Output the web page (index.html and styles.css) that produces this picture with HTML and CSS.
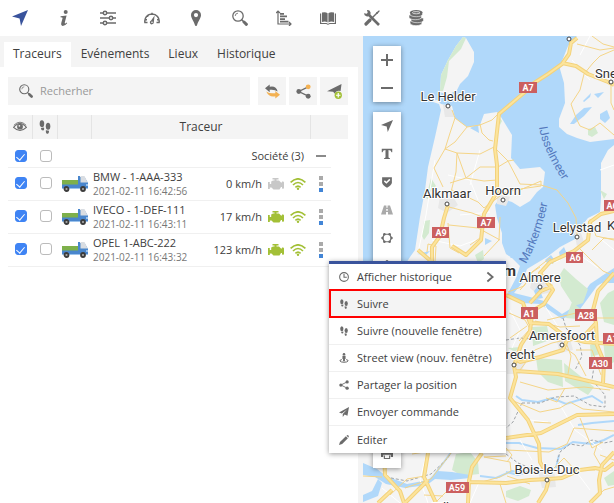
FILE: index.html
```html
<!DOCTYPE html>
<html lang="fr">
<head>
<meta charset="utf-8">
<meta name="viewport" content="width=device-width, initial-scale=1">
<title>Traceurs</title>
<link rel="stylesheet" href="styles.css">
</head>
<body>
<svg class="sprite" aria-hidden="true">
  <symbol id="i-arrow" viewBox="0 0 16 16"><path d="M16 0 9 16 7.600 8.600 0 6.600Z"/></symbol>
  <symbol id="i-info" viewBox="0 0 16 16"><circle cx="9.700" cy="2" r="2"/><path d="M4.600 6.200 10.600 5.400 8.800 12.600Q8.600 13.800 9.400 13.500L10.800 12.500 11.200 13.200Q9 16 6.600 15.900 4.600 15.700 5.200 13.300L6.600 7.900Q6.800 7.200 4.500 7.200Z"/></symbol>
  <symbol id="i-sliders" viewBox="0 0 16 16"><g fill="none" stroke="currentColor" stroke-width="1.500"><path d="M0 3H3.200M6.800 3H16M0 8H9.200M12.800 8H16M0 13H3.200M6.800 13H16"/><circle cx="5" cy="3" r="1.700"/><circle cx="11" cy="8" r="1.700"/><circle cx="5" cy="13" r="1.700"/></g></symbol>
  <symbol id="i-gauge" viewBox="0 0 16 16"><path fill="none" stroke="currentColor" stroke-width="1.500" d="M3.500 12.400H.9A7.200 7.200 0 1 1 15.100 12.400H12.500M8 2.800V5M3 5 4.400 6.400M1.300 9.800H3M14.700 9.800H13"/><path d="M10.600 5.400 9.800 12.400A2 2 0 1 1 7.100 10.500Z"/><circle cx="8" cy="12.300" r=".8" fill="#fff"/></symbol>
  <symbol id="i-pin" viewBox="0 0 16 16"><path fill-rule="evenodd" d="M8 0A5 5 0 0 1 13 5C13 8 10.200 11 9 15.200Q8 17 7 15.200C5.800 11 3 8 3 5A5 5 0 0 1 8 0ZM8 3A2.100 2.100 0 1 0 8 7.200 2.100 2.100 0 0 0 8 3Z"/></symbol>
  <symbol id="i-search" viewBox="0 0 16 16"><circle cx="6" cy="6" r="5.200" fill="none" stroke="currentColor" stroke-width="1.300"/><path fill="none" stroke="currentColor" stroke-width=".8" d="M3.200 6A2.800 2.800 0 0 1 6 3.200"/><path stroke="currentColor" stroke-width="1.400" d="M9.500 9.500 12 12"/><path stroke="currentColor" stroke-width="3" stroke-linecap="round" d="M12 12 14.400 14.300"/></symbol>
  <symbol id="i-chart" viewBox="0 0 16 16"><path fill="none" stroke="currentColor" stroke-width="1.200" d="M2 1V14H15M0 3 2 1 4 3M13 12 15 14 13 16"/><path d="M4 3H8V4.700H4ZM4 5.600H11V7.300H4ZM4 8.200H9V9.900H4ZM4 10.700H12.500V12.400H4Z"/></symbol>
  <symbol id="i-book" viewBox="0 0 16 16"><path d="M2 2.600Q5.500 1.500 7.600 3.200V12.600Q5.500 11 2 12ZM14 2.600Q10.500 1.500 8.400 3.200V12.600Q10.500 11 14 12Z"/><path d="M0 3.600H1.200V13H6.500Q8 14.400 9.500 13H14.800V3.600H16V14H9.700Q8 15.500 6.300 14H0Z"/></symbol>
  <symbol id="i-tools" viewBox="0 0 16 16"><path stroke="currentColor" stroke-width="2.600" d="M4 4 15 15"/><path d="M0 3.200 2.700 3.700 3.700 2.700 3 .1Q5.700-.3 6.500 2.200 6.900 4.500 5.600 5.600 4.400 6.800 2.400 6.200.2 5.600 0 3.200Z"/><path stroke="currentColor" stroke-width="1.500" d="M13.500 2.500 7.500 8.500"/><path d="M12 2.700 15 .3 15.800 1.100 13.400 4Z"/><path stroke="currentColor" stroke-width="3.200" stroke-linecap="round" d="M6 10 2 14"/></symbol>
  <symbol id="i-coins" viewBox="0 0 16 16"><g stroke="#fff" stroke-width=".6"><path d="M2 11V13C2 16.500 14 16.500 14 13V11Z"/><path d="M3 8V10.300C3 13.500 15.500 13.500 15.500 10.300V8Z"/><path d="M1 5V7.300C1 10.500 13.500 10.500 13.500 7.300V5Z"/><path d="M2 2.600V4.300C2 7.500 14.500 7.500 14.500 4.300V2.600Z"/></g><ellipse cx="8.200" cy="2.600" rx="6.300" ry="2.500"/><ellipse cx="8.200" cy="2.700" rx="3.800" ry="1.100" fill="none" stroke="#fff" stroke-width=".7"/></symbol>
  <symbol id="i-refresh" viewBox="0 0 16 16"><path d="M0 4.600 5 .5V3Q11.800 1.500 13.500 8 10.500 5.600 5 6.200V8.700Z"/><path fill="#f3b152" d="M16 11.400 11 7.400V9.800Q5 10.600 1.300 8 4.500 14.600 11 13V15.500Z"/></symbol>
  <symbol id="i-share" viewBox="0 0 16 16"><path fill="none" stroke="currentColor" stroke-width="1.400" d="M13 3 3 8 13 13"/><circle cx="3" cy="8" r="2.600"/><circle cx="13" cy="13" r="2.600"/><circle class="share-tip" cx="13" cy="3" r="2.600"/></symbol>
  <symbol id="i-send-add" viewBox="0 0 16 16"><path d="M15.500 0 14.500 7.500Q9.500 6.500 8.500 10.500L6.500 8.200 0 7.700Z"/><circle cx="12" cy="12" r="3.900" fill="#a3c037"/><path stroke="#fff" stroke-width="1.300" d="M9.600 12H14.400M12 9.600V14.400"/></symbol>
  <symbol id="i-eye" viewBox="0 0 16 16"><path fill="none" stroke="currentColor" stroke-width="1.300" d="M.7 8.500Q8-.5 15.300 8.500 8 15.500 .7 8.500Z"/><circle cx="8" cy="7.600" r="3.300"/><circle cx="7.300" cy="6.600" r="1" fill="#f3f3f3"/><path fill="none" stroke="currentColor" d="M1 6Q8-1 15 6"/></symbol>
  <symbol id="i-feet" viewBox="0 0 16 16"><ellipse cx="4.500" cy="4.200" rx="2.600" ry="4"/><path d="M3.300 9 6.900 8.700Q7.500 12 5.700 12 3.500 12 3.300 9Z"/><ellipse cx="11.500" cy="7.200" rx="2.600" ry="4"/><path d="M9 11.700 12.600 12.200Q12.600 15.800 10.500 15.800 8.700 15.500 9 11.700Z"/></symbol>
  <symbol id="i-truck" viewBox="0 0 26 16"><path fill="#4986cd" d="M16 0H18V1H22.500L26 7V13H0V8H16Z"/><path fill="#7eb04b" d="M0 4H16V8.500H0Z"/><path fill="#d9dde2" d="M18.500 0H22.500L25.500 6.500H18.500Z"/><path fill="#9cc3ec" d="M0 12H26V13H0ZM24 8H26V10H24Z"/><g fill="#aaa" stroke="#3c3c3c" stroke-width="1.800"><circle cx="4.500" cy="13" r="2"/><circle cx="21" cy="13" r="2"/></g></symbol>
  <symbol id="i-engine" viewBox="0 0 16 12"><path d="M4.500 0H10.500V1.400H8.500V2.500H11L13 4.500H14V3.500Q16 3 16 4.500V10Q16 11 14 10.500V9H13L11.500 11.500H5.500L3.500 9.500H1.800V11H0V4H1.800V6H3.200V3.500L5 2.500H6.500V1.400H4.500Z"/></symbol>
  <symbol id="i-wifi" viewBox="0 0 16 12"><path fill="none" stroke="currentColor" stroke-width="1.600" d="M.6 4.400Q8-2.800 15.400 4.400M3 7Q8 2 13 7M5.400 9.400Q8 6.900 10.600 9.400"/><circle cx="8" cy="10.700" r="1.200"/></symbol>
  <symbol id="i-dots" viewBox="0 0 4 18"><path fill="#aaa" d="M0 1H4V5H0ZM0 7H4V11H0Z"/><path fill="#4285d6" d="M0 13H4V17H0Z"/></symbol>
  <symbol id="i-clock" viewBox="0 0 16 16"><circle cx="8" cy="8" r="7" fill="none" stroke="currentColor" stroke-width="1.700"/><path fill="none" stroke="currentColor" stroke-width="1.700" d="M8 3V8.500H12.500"/></symbol>
  <symbol id="i-person" viewBox="0 0 16 16"><circle cx="8" cy="2" r="2"/><path d="M5.500 4.500H10.500V9.500H9.500V13H6.500V9.500H5.500Z"/><path fill="none" stroke="currentColor" stroke-width="1.600" d="M4.500 10.500Q.8 11.200 1.500 12.800 3 14.800 8 14.800 13 14.800 14.500 12.800 15.200 11.200 11.500 10.500"/></symbol>
  <symbol id="i-plane" viewBox="0 0 16 16"><path d="M16 0 13.500 14 9 12 6 16V11L13 4 4.500 10.500 0 8.700Z"/></symbol>
  <symbol id="i-pencil" viewBox="0 0 16 16"><path d="M0 16 1.500 11 11 1.800 14.200 5 5 14.500ZM12 1 13 .2Q16 0 15.800 3L15 4Z"/></symbol>
  <symbol id="i-chevron" viewBox="0 0 16 16"><path fill="none" stroke="currentColor" stroke-width="2.400" d="M4.500 2 11.500 8 4.500 14"/></symbol>
  <symbol id="i-plus" viewBox="0 0 16 16"><path stroke="currentColor" stroke-width="2" d="M2 8H14M8 2V14"/></symbol>
  <symbol id="i-minus" viewBox="0 0 16 16"><path stroke="currentColor" stroke-width="2" d="M2 8H14"/></symbol>
  <symbol id="i-text" viewBox="0 0 16 16"><path d="M1 1H15V5.500H14Q13.500 2.500 10 2.500V12Q10 13.500 12 13.700V14.700H4V13.700Q6 13.500 6 12V2.500Q2.500 2.500 2 5.500H1Z"/></symbol>
  <symbol id="i-shield" viewBox="0 0 16 16"><path d="M1.500 1.500H14.500V9Q14 12.500 8 15.500 2 12.500 1.500 9Z"/><path fill="none" stroke="#fff" stroke-width="2" d="M4.500 6.500 7.200 9 11.800 4.500"/></symbol>
  <symbol id="i-road" viewBox="0 0 16 16"><path fill-rule="evenodd" d="M4 2H7.200V5H8.800V2H12L16 14H9.300V10.500H6.700V14H0ZM7 6.500V9H9V6.500Z"/></symbol>
  <symbol id="i-poly" viewBox="0 0 16 16"><path fill="none" stroke="currentColor" stroke-width="1.600" d="M4.500 3H11.500L14 8 11.500 13H4.500L2 8Z"/><circle cx="4.500" cy="3" r="1.700"/><circle cx="11.500" cy="3" r="1.700"/><circle cx="14" cy="8" r="1.700"/><circle cx="11.500" cy="13" r="1.700"/><circle cx="4.500" cy="13" r="1.700"/><circle cx="2" cy="8" r="1.700"/></symbol>
  <symbol id="i-print" viewBox="0 0 16 16"><path d="M3.500 1H12.500V4H3.500ZM0 5H16V12H13V9H3V12H0Z"/><path fill="none" stroke="currentColor" stroke-width="1.500" d="M4.500 10V14H11.500V10"/></symbol>
</svg>

<header class="topbar">
  <nav class="topnav" aria-label="Outils">
    <button class="topnav-btn is-active" aria-label="Traceurs"><svg class="icon"><use href="#i-arrow"/></svg></button>
    <button class="topnav-btn" aria-label="Informations"><svg class="icon"><use href="#i-info"/></svg></button>
    <button class="topnav-btn" aria-label="Réglages"><svg class="icon"><use href="#i-sliders"/></svg></button>
    <button class="topnav-btn" aria-label="Tableau de bord"><svg class="icon"><use href="#i-gauge"/></svg></button>
    <button class="topnav-btn" aria-label="Lieux"><svg class="icon"><use href="#i-pin"/></svg></button>
    <button class="topnav-btn" aria-label="Recherche"><svg class="icon"><use href="#i-search"/></svg></button>
    <button class="topnav-btn" aria-label="Rapports"><svg class="icon"><use href="#i-chart"/></svg></button>
    <button class="topnav-btn" aria-label="Carnet"><svg class="icon"><use href="#i-book"/></svg></button>
    <button class="topnav-btn" aria-label="Entretien"><svg class="icon"><use href="#i-tools"/></svg></button>
    <button class="topnav-btn" aria-label="Dépenses"><svg class="icon"><use href="#i-coins"/></svg></button>
  </nav>
</header>

<main class="workspace">
  <section class="sidebar">
    <nav class="tabs">
      <a class="tab is-active" href="#traceurs">Traceurs</a>
      <a class="tab" href="#evenements">Evénements</a>
      <a class="tab" href="#lieux">Lieux</a>
      <a class="tab" href="#historique">Historique</a>
    </nav>
    <div class="panel">
      <div class="searchbar">
        <label class="search"><svg class="icon"><use href="#i-search"/></svg><input type="text" placeholder="Recherher" aria-label="Recherher"></label>
        <div class="actions">
          <button class="action" aria-label="Actualiser"><svg class="icon"><use href="#i-refresh"/></svg></button>
          <button class="action action-share" aria-label="Partager"><svg class="icon"><use href="#i-share"/></svg></button>
          <button class="action" aria-label="Ajouter"><svg class="icon"><use href="#i-send-add"/></svg></button>
        </div>
      </div>
      <table class="trackers">
        <colgroup><col class="c-check"><col class="c-check"><col class="c-icon"><col><col class="c-menu"><col class="c-tail"></colgroup>
        <thead>
          <tr>
            <th aria-label="Visible"><svg class="icon"><use href="#i-eye"/></svg></th>
            <th aria-label="Suivre"><svg class="icon"><use href="#i-feet"/></svg></th>
            <th></th>
            <th>Traceur</th>
            <th colspan="2"></th>
          </tr>
        </thead>
        <tbody>
          <tr class="group">
            <td><input type="checkbox" checked aria-label="Tout afficher"></td>
            <td><input type="checkbox" aria-label="Tout suivre"></td>
            <td></td>
            <td class="group-name">Société (3)</td>
            <td><button class="row-btn" aria-label="Réduire"><span class="dash"></span></button></td>
            <td></td>
          </tr>
          <tr>
            <td class="pick"><input type="checkbox" checked aria-label="Afficher BMW"></td>
            <td class="pick"><input type="checkbox" aria-label="Suivre BMW"></td>
            <td><svg class="truck"><use href="#i-truck"/></svg></td>
            <td><div class="tracker"><div class="who"><span class="name">BMW - 1-AAA-333</span><time class="time">2021-02-11 16:42:56</time></div><span class="speed">0 km/h</span><svg class="status is-off"><use href="#i-engine"/></svg><svg class="status"><use href="#i-wifi"/></svg></div></td>
            <td><button class="row-btn" aria-label="Menu BMW"><svg class="dots"><use href="#i-dots"/></svg></button></td>
            <td></td>
          </tr>
          <tr>
            <td class="pick"><input type="checkbox" checked aria-label="Afficher IVECO"></td>
            <td class="pick"><input type="checkbox" aria-label="Suivre IVECO"></td>
            <td><svg class="truck"><use href="#i-truck"/></svg></td>
            <td><div class="tracker"><div class="who"><span class="name">IVECO - 1-DEF-111</span><time class="time">2021-02-11 16:43:11</time></div><span class="speed">17 km/h</span><svg class="status"><use href="#i-engine"/></svg><svg class="status"><use href="#i-wifi"/></svg></div></td>
            <td><button class="row-btn" aria-label="Menu IVECO"><svg class="dots"><use href="#i-dots"/></svg></button></td>
            <td></td>
          </tr>
          <tr>
            <td class="pick"><input type="checkbox" checked aria-label="Afficher OPEL"></td>
            <td class="pick"><input type="checkbox" aria-label="Suivre OPEL"></td>
            <td><svg class="truck"><use href="#i-truck"/></svg></td>
            <td><div class="tracker"><div class="who"><span class="name">OPEL 1-ABC-222</span><time class="time">2021-02-11 16:43:32</time></div><span class="speed">123 km/h</span><svg class="status"><use href="#i-engine"/></svg><svg class="status"><use href="#i-wifi"/></svg></div></td>
            <td class="menu-anchor"><button class="row-btn" aria-label="Menu OPEL"><svg class="dots"><use href="#i-dots"/></svg></button>
              <div class="menu" role="menu">
                <button class="menu-item" role="menuitem"><svg class="icon"><use href="#i-clock"/></svg>Afficher historique<svg class="icon more"><use href="#i-chevron"/></svg></button>
                <button class="menu-item is-marked" role="menuitem"><svg class="icon"><use href="#i-feet"/></svg>Suivre</button>
                <button class="menu-item" role="menuitem"><svg class="icon"><use href="#i-feet"/></svg>Suivre (nouvelle fenêtre)</button>
                <button class="menu-item" role="menuitem"><svg class="icon"><use href="#i-person"/></svg>Street view (nouv. fenêtre)</button>
                <button class="menu-item" role="menuitem"><svg class="icon"><use href="#i-share"/></svg>Partager la position</button>
                <button class="menu-item" role="menuitem"><svg class="icon"><use href="#i-plane"/></svg>Envoyer commande</button>
                <button class="menu-item" role="menuitem"><svg class="icon"><use href="#i-pencil"/></svg>Editer</button>
              </div>
            </td>
            <td></td>
          </tr>
        </tbody>
      </table>
    </div>
  </section>

  <section class="map" aria-label="Carte">
    <svg class="map-canvas" viewBox="363 36 251 467" preserveAspectRatio="xMinYMin slice">
      <defs>
        <path id="ijssel" d="M539 127Q542 148 563 181"/>
        <path id="marker" d="M526 264Q541 237 548 201"/>
      </defs>
      <rect class="water" x="363" y="36" width="600" height="700"/>
      <g class="land">
        <path d="M463 37 466 38 474 52 474 62 468 76 460 84 457 90 448 95 440 92 441 75 448 60 456 46Z"/>
        <path d="M430 101 437 100 441 104 452 106 455 118 467 127 480 125 484 114 497 112 501 117 512 135 511 158 520 169 540 167 545 172 543 187 537 192 530 201 520 207 512 202 500 198 495 205 497 218 502 233 502 243 506 254 512 258 520 266 516 278 506 297 522 303 540 304 562 319 578 312 597 286 614 275V503H363V330L410 257 415 250 420 217 425 190 428 167 435 137 441 110 439 104Z"/>
        <path d="M614 145 608 150 601 163V198L600 212 588 218 580 228 577 238 560 247 547 257 527 269 522 283 514 293 530 297 544 301 562 314 575 306 590 284 614 268Z"/>
        <path d="M577 36 568 46 562 61 560 69 564 83 565 103 559 119 559 127 567 134 577 138 590 142 614 139V36Z"/>
      </g>
      <g class="green">
        <path d="M463 37 466 38 461 49 449 61 447 77 443 91 440 91 441 75 448 60 456 46Z"/>
        <path d="M431 178 436 186 430 192 429 200 426 198ZM424 221 430 220 429 233 424 240 422 236ZM475 255 483 250 484 259 478 263ZM499 117 502 121 500 125ZM588 129 595 127 598 133 592 137 588 135Z"/>
        <path d="M564 268 576 279 588 289 583 303 574 306 561 286 559 276ZM600 190 607 194 604 199ZM532 327 547 326 550 340 533 346ZM508 348 520 347 515 352ZM536 358 562 360 563 387 548 382 538 372ZM564 363 594 387 588 395 565 381ZM572 302 582 310 578 319 566 318ZM600 303 608 293 614 290V325L604 322ZM603 340 614 337V362L606 367ZM456 454 470 452 478 462 479 474 462 476 452 470ZM506 491 520 486 531 490 529 496 518 501 506 497ZM604 478 614 471V485L608 486ZM590 345 599 341 600 354 591 357Z"/>
      </g>
      <g class="urban">
        <path d="M440 197 452 195 458 205 447 213 438 208ZM497 193 510 197 506 206 497 204ZM533 275 550 279 553 292 538 295 530 288ZM506 355 518 350 527 360 520 374 507 374ZM555 335 569 335 573 350 560 353ZM538 471 554 470 556 487 542 488ZM573 228 580 230 584 242 577 246ZM443 105 450 105 454 117 445 117Z"/>
      </g>
      <g class="lakes">
        <path d="M470 128 478 124 479 133ZM485 238 492 241 485 245ZM510 258 515 253 514 258ZM570 124 576 115 584 108 592 107 584 116 574 124ZM583 101 591 93 590 97 584 102ZM600 114 607 110 610 118 605 123 600 119ZM594 94 604 92 598 98ZM545 260 551 255 556 262 549 266ZM559 252 564 247 567 254 560 257ZM534 291 538 286 543 298 537 299ZM417 254 430 251 426 255ZM363 463 377 469 386 476 407 484 428 480 438 471 452 472 470 475 470 478 451 480 435 479 427 485 405 488 386 484 375 477 363 475ZM363 495 372 491 378 479 382 483 378 496 363 502ZM594 286 602 276 614 269V283L602 283Z"/>
      </g>
      <g class="rivers">
        <path d="M506 443 519 443 537 448 561 449 573 442 582 443 592 444 604 440 614 435M516 396 522 400 538 402 552 398 566 404 582 399 592 396 603 403M578 425 592 423 614 421M480 476 496 478 512 471 524 473M556 468 559 455M506 472 518 475 530 471M429 482 444 462 452 451"/>
      </g>
      <g class="borders">
        <path d="M563 318 566 328 580 345 582 356 575 370M522 403 513 422 506 428M522 403 540 403 556 397 574 396 590 405 605 407 605 395 592 380 594 366M557 462 560 452 570 444 582 446 592 440 604 443 614 441M506 340 520 338 531 339M506 454 518 463 530 468M386 477 407 481 431 474 447 459 453 450"/>
      </g>
      <g class="streets">
        <path d="M435 160 430 190 426 215 419 248M448 175 470 180 478 200M480 150 470 185M460 215 490 212M432 240 460 246 476 240M600 170 614 165M580 255 598 268M540 270 560 260M590 230 614 250M510 400 530 420 548 422M560 405 575 430 602 450M520 440 532 460M575 470 590 490M382 488 400 503M426 455 420 480 428 503M480 480 470 503M572 60 590 80M590 36 580 55M510 310 520 330 512 348M545 306 560 330"/>
      </g>
      <g class="minor">
        <path d="M452 110 455 118 467 127 480 125 492 120 498 114M455 118 450 133 445 149 434 168 443 187M467 127 455 142 445 149M480 124 482 133 489 140 493 141M445 149 457 153 480 154 494 147M457 153 456 172 450 196M457 153 466 178 450 183M466 178 480 167 498 167 508 161M466 178 484 181 497 180M496 149 508 161 520 184 541 185M508 161 514 160M520 190 541 181 541 186 520 189 503 193M541 185 557 190 568 203 576 218 577 235M452 190 478 202 484 208 500 196M449 207 472 213 488 219M449 225 478 228 500 240M448 223 450 248 459 253M470 245 480 238M500 217 499 240 484 256M427 252 428 244 436 246 435 262"/>
        <path d="M577 44 600 50 614 48M592 36 603 44 614 47M614 50 600 56 593 63 584 74 580 90 571 104 576 118 580 126 590 130 600 123 614 135M611 80 611 103 614 110"/>
        <path d="M578 247 591 260 603 271 614 276M540 267 528 275 527 282 520 290M553 264 550 258 532 272 524 286 508 292M590 219 596 236 614 240M592 250 604 238 614 239M547 320 576 313 590 318 614 318M509 313 525 320 530 329 519 341M535 321 560 327 580 326M510 338 527 326M520 370 535 350 552 343 565 340M567 345 571 356 568 374M562 346 575 355 586 376M576 350 592 350 601 375M565 388 557 402 546 398M511 400 540 412 560 408 570 402 583 409 614 412M580 418 592 448 603 442M551 423 534 422M520 382 548 390 584 387 610 390M506 450 549 452 567 444 574 428 614 431M595 470 575 470 564 458 554 468M597 445 594 454 601 466M507 476 530 484M506 448 512 455 507 462M590 503 604 490 614 487"/>
        <path d="M363 476 382 477M390 495 407 479 425 476M405 488 431 479 451 453M443 496 424 495M435 503 449 489 470 487M478 483 500 477 511 471 510 462 484 457M484 457 506 456M412 454 425 452M600 455 614 460M500 484 506 503"/>
      </g>
      <g class="casing">
        <path id="roads" d="M577 38 571 43 569 54 562 64 548 74 534 83 525 92 512 103 499 114 495 149 497 165 497 192 484 214 481 240 466 255 452 246M562 63 576 66 588 74 608 82 614 85M448 205 444 218 440 236 432 247 432 262 418 250M614 211 601 214 590 222 588 240 574 251 550 262 540 273 553 290 544 304 532 311M506 295 523 303 530 323 549 324 566 337 585 342 614 344M530 303 541 291 553 286M614 273 598 291 593 310 596 323 583 337 567 340 563 350 540 357 520 362 512 356M532 315 530 331 521 345 514 366 516 377 510 398 528 420 539 444 540 462 547 474M516 371 530 372 558 374 580 379 614 387M506 438 541 433 565 421 577 415 614 414M596 323 597 345 604 362 603 383M428 453 424 477 436 503M384 453 385 475 400 491 404 503M482 453 472 467 469 481 468 503M470 482 506 483 530 480 549 479 562 478 580 470 595 468 605 470 614 463M614 452 602 465 599 480 600 493 590 503M549 479 546 490 538 503M405 503 428 480M378 503 392 490"/>
      </g>
      <use class="highway" href="#roads"/>
      <g class="cities">
        <circle cx="448" cy="106" r="2"/><circle cx="569" cy="39" r="2"/><circle cx="611" cy="82" r="2"/><circle cx="447" cy="204" r="2"/><circle cx="503" cy="200" r="2"/><circle cx="577" cy="237" r="2"/><circle cx="540" cy="287" r="2"/><circle cx="562" cy="345" r="2"/><circle cx="514" cy="365" r="2"/><circle cx="547" cy="480" r="2"/>
      </g>
      <g class="labels">
        <text x="448" y="101">Le Helder</text>
        <text x="447" y="198">Alkmaar</text>
        <text x="503" y="195">Hoorn</text>
        <text x="577" y="232">Lelystad</text>
        <text x="540" y="282">Almere</text>
        <text x="562" y="340">Amersfoort</text>
        <text class="to" x="535" y="359">recht</text>
        <text x="547" y="474">Bois-le-Duc</text>
        <text class="from" x="595" y="78">Sne</text>
        <text class="from" x="607" y="230">K</text>
        <text class="from" x="432" y="512">Tilburg</text>
        <text class="capital" x="516" y="276">m</text>
      </g>
      <g class="seas"><text><textPath href="#ijssel">IJsselmeer</textPath></text><text><textPath href="#marker">Markermeer</textPath></text></g>
      <g class="shields">
        <rect x="519" y="82" width="18" height="11"/><text x="528" y="91">A7</text>
        <rect x="477" y="217" width="18" height="11"/><text x="486" y="226">A7</text>
        <rect x="432" y="227" width="17" height="11"/><text x="441" y="236">A9</text>
        <rect x="566" y="252" width="17" height="11"/><text x="575" y="261">A6</text>
        <rect x="604" y="200" width="17" height="11"/><text x="612" y="209">A6</text>
        <rect x="521" y="307" width="17" height="12"/><text x="529" y="317">A1</text>
        <rect x="575" y="309" width="22" height="12"/><text x="586" y="319">A28</text>
        <rect x="603" y="333" width="18" height="11"/><text x="612" y="342">A1</text>
        <rect x="589" y="357" width="23" height="12"/><text x="600" y="367">A30</text>
        <rect x="446" y="482" width="23" height="11"/><text x="457" y="491">A59</text>
      </g>
    </svg>
    <div class="map-tools">
      <div class="toolbox">
        <button class="tool" aria-label="Zoom avant"><svg class="icon"><use href="#i-plus"/></svg></button>
        <button class="tool" aria-label="Zoom arrière"><svg class="icon"><use href="#i-minus"/></svg></button>
      </div>
      <div class="toolbox">
        <button class="tool" aria-label="Position"><svg class="icon small"><use href="#i-arrow"/></svg></button>
        <button class="tool" aria-label="Texte"><svg class="icon small"><use href="#i-text"/></svg></button>
        <button class="tool" aria-label="Zones"><svg class="icon small"><use href="#i-shield"/></svg></button>
        <button class="tool is-off" aria-label="Trafic"><svg class="icon small"><use href="#i-road"/></svg></button>
        <button class="tool" aria-label="Polygone"><svg class="icon small"><use href="#i-poly"/></svg></button>
        <button class="tool" aria-label="Street view"><svg class="icon small"><use href="#i-person"/></svg></button>
        <button class="tool tool-last" aria-label="Imprimer"><svg class="icon small"><use href="#i-print"/></svg></button>
      </div>
    </div>
  </section>
</main>
</body>
</html>
```
FILE: styles.css
```css
* { box-sizing: border-box; }

body {
  margin: 0;
  min-height: 100vh;
  display: flex;
  flex-direction: column;
  overflow: hidden;
  background: #fff;
  color: #404040;
  font: 11px/16px "Open Sans", "Noto Sans", sans-serif;
}

button {
  display: flex;
  align-items: center;
  justify-content: center;
  margin: 0;
  padding: 0;
  border: 0;
  background: none;
  color: inherit;
  font: inherit;
}

.sprite { position: absolute; width: 0; height: 0; }
.icon { flex: none; width: 16px; height: 16px; fill: currentColor; color: #6b6b6b; }
.icon.small { width: 12px; height: 12px; }

/* Top bar */
.topbar { height: 36px; flex: none; }
.topnav { display: flex; gap: 4px; height: 100%; }
.topnav-btn { width: 40px; height: 100%; }
.topnav-btn.is-active .icon { color: #39539c; }

/* Main area */
.workspace { flex: 1; display: grid; grid-template-columns: 363px 1fr; }
.sidebar { display: flex; flex-direction: column; background: #f4f4f4; }

.tabs { display: flex; align-items: flex-end; gap: 1px; height: 31px; padding: 0 4px; }
.tab {
  padding: 3px 9px 4px;
  color: #404040;
  font-size: 12px;
  line-height: 18px;
  text-decoration: none;
}
.tab.is-active { background: #fff; }

.panel { flex: 1; margin-right: 5px; padding: 10px 10px 10px 8px; background: #fff; }

.searchbar { display: flex; gap: 8px; margin-bottom: 10px; }
.search {
  flex: 1;
  display: flex;
  align-items: center;
  gap: 7px;
  height: 28px;
  padding: 0 11px;
  background: #f4f4f4;
}
.search .icon { width: 14px; height: 14px; }
.search input {
  flex: 1;
  min-width: 0;
  padding: 0;
  border: 0;
  outline: 0;
  background: none;
  color: #404040;
  font: inherit;
}
.search input::placeholder { color: #999; opacity: 1; }
.actions { display: flex; gap: 3px; }
.action { width: 28px; height: 28px; background: #f4f4f4; }
.action .icon { width: 15px; height: 15px; }
.action-share { --share-tip: #f3b152; }
.share-tip { fill: var(--share-tip, currentColor); }

/* Tracker table */
.trackers { width: 100%; table-layout: fixed; border-collapse: separate; border-spacing: 0; }
.c-check { width: 25px; }
.c-icon { width: 34px; }
.c-menu { width: 20px; }
.c-tail { width: 17px; }

.trackers th {
  height: 24px;
  padding: 0;
  border-right: 1px solid #e4e4e4;
  background: #f4f4f4;
  font-size: 12px;
  font-weight: 400;
  vertical-align: middle;
}
.trackers th:last-child { border-right: 0; }
.trackers th .icon { display: block; width: 14px; height: 14px; margin: 0 auto; }

.trackers td {
  height: 33px;
  padding: 0;
  border-bottom: 1px solid #f0f0f0;
  vertical-align: middle;
}
.trackers td:last-child { border-bottom: 0; }
.trackers .pick { padding-bottom: 2px; }
.trackers .group td { height: 29px; padding-top: 5px; }
.trackers .group-name { padding-right: 7px; text-align: right; }

.trackers input[type="checkbox"] {
  appearance: none;
  display: block;
  width: 12px;
  height: 12px;
  margin: 0 auto;
  border: 1px solid #bbb;
  border-radius: 3px;
  background: #fff;
}
.trackers input[type="checkbox"]:checked { border-color: #3f84f4; background: #3f84f4; }
.trackers input[type="checkbox"]:checked::after {
  content: "";
  display: block;
  width: 4px;
  height: 7px;
  margin: 1px auto 0;
  border: solid #fff;
  border-width: 0 1px 1px 0;
  transform: rotate(40deg);
}

.truck { display: block; width: 26px; height: 16px; margin-left: 4px; }
.tracker { display: flex; align-items: center; gap: 6px; padding: 0 5px 0 1px; }
.who { flex: 1; display: flex; flex-direction: column; }
.name { line-height: 14px; }
.time { color: #777; font-size: 10px; line-height: 14px; }
.status { width: 16px; height: 12px; fill: currentColor; color: #a3c037; }
.status.is-off { color: #c8c8c8; }
.row-btn { width: 20px; height: 18px; }
.dots { width: 4px; height: 18px; }
.dash { width: 10px; height: 2px; background: #8a8a8a; }

/* Context menu */
.menu-anchor { position: relative; }
.menu {
  position: absolute;
  z-index: 10;
  top: 27px;
  left: 18px;
  width: 177px;
  border-top: 3px solid #39539c;
  background: #fff;
  box-shadow: 0 1px 5px rgba(0, 0, 0, .4);
}
.menu-item {
  position: relative;
  width: 100%;
  height: 27px;
  padding: 0 10px;
  gap: 8px;
  justify-content: flex-start;
  border-bottom: 1px solid #f0f0f0;
  white-space: nowrap;
}
.menu-item:last-child { border-bottom: 0; }
.menu-item .icon { width: 10px; height: 10px; }
.menu-item .more { width: 12px; height: 12px; margin-left: auto; }
.menu-item.is-marked { background: #f4f4f4; }
.menu-item.is-marked::after {
  content: "";
  position: absolute;
  inset: -2px 0 -1px;
  border: 2px solid #f00;
}

/* Map */
.map { position: relative; overflow: hidden; background: #b0d8fa; }
.map-canvas { position: absolute; inset: 0; width: 100%; height: 100%; font-family: Roboto, sans-serif; }
.map-tools { position: absolute; top: 10px; left: 10px; display: flex; flex-direction: column; gap: 10px; }
.toolbox {
  display: flex;
  flex-direction: column;
  background: #fff;
  box-shadow: 0 1px 5px rgba(0, 0, 0, .4);
}
.tool { width: 28px; height: 28px; }
.tool.is-off .icon { color: #aaa; }
.tool-last { margin-top: 160px; }

.water { fill: #b0d8fa; }
.land { fill: #f4f4f4; }
.green { fill: #d3ead0; }
.urban { fill: #e8e8e8; }
.lakes { fill: #b0d8fa; }
.rivers { fill: none; stroke: #b0d8fa; stroke-width: 2; }
.borders { fill: none; stroke: #a0a4a8; stroke-dasharray: 3 2; }
.streets { fill: none; stroke: #fff; }
.minor { fill: none; stroke: #f4d588; stroke-linejoin: round; }
.casing { fill: none; stroke: #f3d27c; stroke-width: 4; stroke-linejoin: round; }
.highway { fill: none; stroke: #fce49c; stroke-width: 2; }
.cities { fill: #fff; stroke: #444; stroke-width: 1; }
.labels text {
  fill: #333;
  stroke: #fff;
  stroke-width: 2px;
  stroke-linejoin: round;
  paint-order: stroke;
  font-size: 13px;
  text-anchor: middle;
}
.labels .from { text-anchor: start; }
.labels .to { text-anchor: end; }
.labels .capital { text-anchor: end; font-size: 15px; font-weight: 700; }
.seas { fill: #5479bd; font-size: 12px; }
.shields rect { fill: #cb5f5f; }
.shields text { fill: #fff; font-size: 9px; font-weight: 700; text-anchor: middle; }
```
